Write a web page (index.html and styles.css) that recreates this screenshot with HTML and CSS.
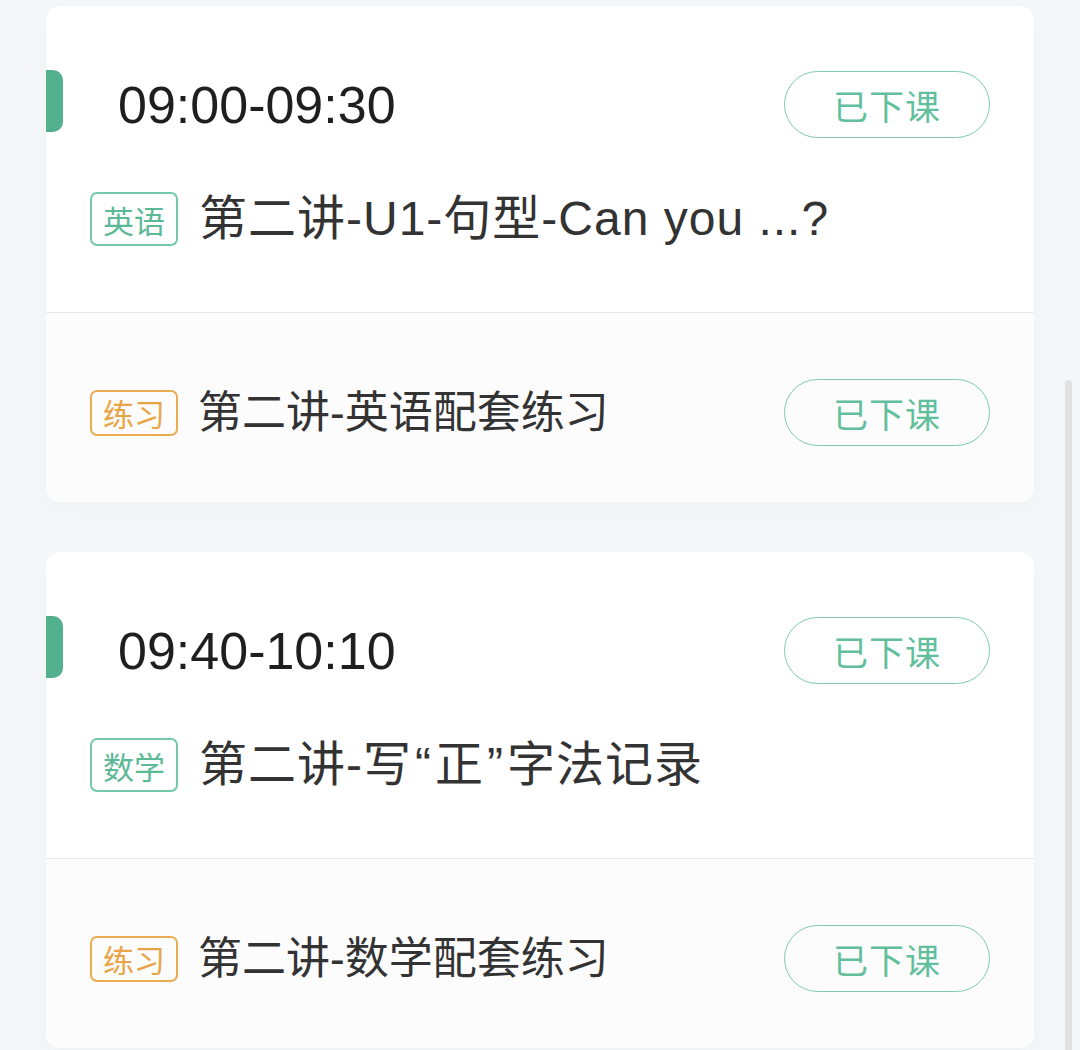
FILE: index.html
```html
<!DOCTYPE html>
<html lang="zh-CN">
<head>
    <meta charset="UTF-8">
    <meta name="viewport" content="width=device-width, initial-scale=1.0">
    <title>课程表</title>
    <link rel="stylesheet" href="styles.css">
</head>
<body>
    <div class="lesson_list">
        <!-- Lesson 1 -->
        <div class="lesson">
            <div class="lesson_main">
                <div class="time_row">
                    <span class="mark"></span>
                    <span class="time">09:00-09:30</span>
                    <span class="status">已下课</span>
                </div>
                <div class="title_row">
                    <span class="tag tag-green">英语</span>
                    <span class="title">第二讲-U1-句型-Can you ...?</span>
                </div>
            </div>
            <div class="lesson_practice">
                <span class="tag tag-small tag-orange">练习</span>
                <span class="title">第二讲-英语配套练习</span>
                <span class="status">已下课</span>
            </div>
        </div>

        <!-- Lesson 2 -->
        <div class="lesson">
            <div class="lesson_main">
                <div class="time_row">
                    <span class="mark"></span>
                    <span class="time">09:40-10:10</span>
                    <span class="status">已下课</span>
                </div>
                <div class="title_row">
                    <span class="tag tag-green">数学</span>
                    <span class="title">第二讲-写<span class="quote">“</span>正<span class="quote">”</span>字法记录</span>
                </div>
            </div>
            <div class="lesson_practice">
                <span class="tag tag-small tag-orange">练习</span>
                <span class="title">第二讲-数学配套练习</span>
                <span class="status">已下课</span>
            </div>
        </div>
    </div>

    <div class="scrollbar"></div>
</body>
</html>
```

FILE: styles.css
```css
html, body{
    margin: 0;
    height: 100%;
    overflow: hidden;
}
body{
    font-family: "Liberation Sans", "Noto Sans CJK SC", sans-serif;
    background-color: #f6f7fa;
    color: #333;
}
.lesson_list{
    display: flex;
    flex-direction: column;
    gap: 50px;
    padding: 6px 46px 0 46px;
}
.lesson{
    background-color: #fff;
    border-radius: 14px;
    box-shadow: 0 6px 24px rgba(120, 130, 160, 0.06);
    overflow: hidden;
}
.lesson_main{
    height: 307px;
    box-sizing: border-box;
    padding: 65px 44px 0 44px;
    border-bottom: 1px solid #e8e8ea;
}
.time_row{
    display: flex;
    align-items: center;
    margin-left: -44px;
}
.mark{
    align-self: flex-start;
    margin-top: -1px;
    width: 17px;
    height: 62px;
    background-color: #52b08f;
    border-radius: 0 10px 10px 0;
}
.time{
    margin-left: 55px;
    font-size: 52px;
    line-height: 1;
    color: #1f1f1f;
    flex: 1;
}
.status{
    width: 206px;
    height: 67px;
    box-sizing: border-box;
    border: 1.5px solid #7fcbb0;
    border-radius: 34px;
    color: #62bf9c;
    font-size: 35px;
    display: flex;
    justify-content: center;
    align-items: center;
    letter-spacing: 1px;
}
.title_row{
    display: flex;
    align-items: center;
    margin-top: 54px;
}
.title_row .title{
    font-size: 48px;
    letter-spacing: 1px;
}
.quote{
    margin: 0 3px;
}
.tag{
    width: 88px;
    height: 54px;
    box-sizing: border-box;
    border: 2px solid #74c9a9;
    border-radius: 7px;
    font-size: 31px;
    display: flex;
    justify-content: center;
    align-items: center;
    flex-shrink: 0;
}
.tag-green{
    color: #5cb995;
}
.tag-orange{
    border-color: #eaac52;
    color: #e8a546;
}
.tag-small{
    height: 46px;
}
.title{
    margin-left: 21px;
    font-size: 44px;
    line-height: 1;
    color: #333;
}
.lesson_practice{
    display: flex;
    align-items: center;
    padding: 66px 44px 56px 44px;
    background-color: #fcfcfd;
}
.lesson_practice .title{
    margin-left: 20px;
    flex: 1;
}
.scrollbar{
    position: fixed;
    right: 8px;
    top: 380px;
    bottom: 0;
    width: 7px;
    background-color: #e1e1e4;
    border-radius: 4px 4px 0 0;
}
```
